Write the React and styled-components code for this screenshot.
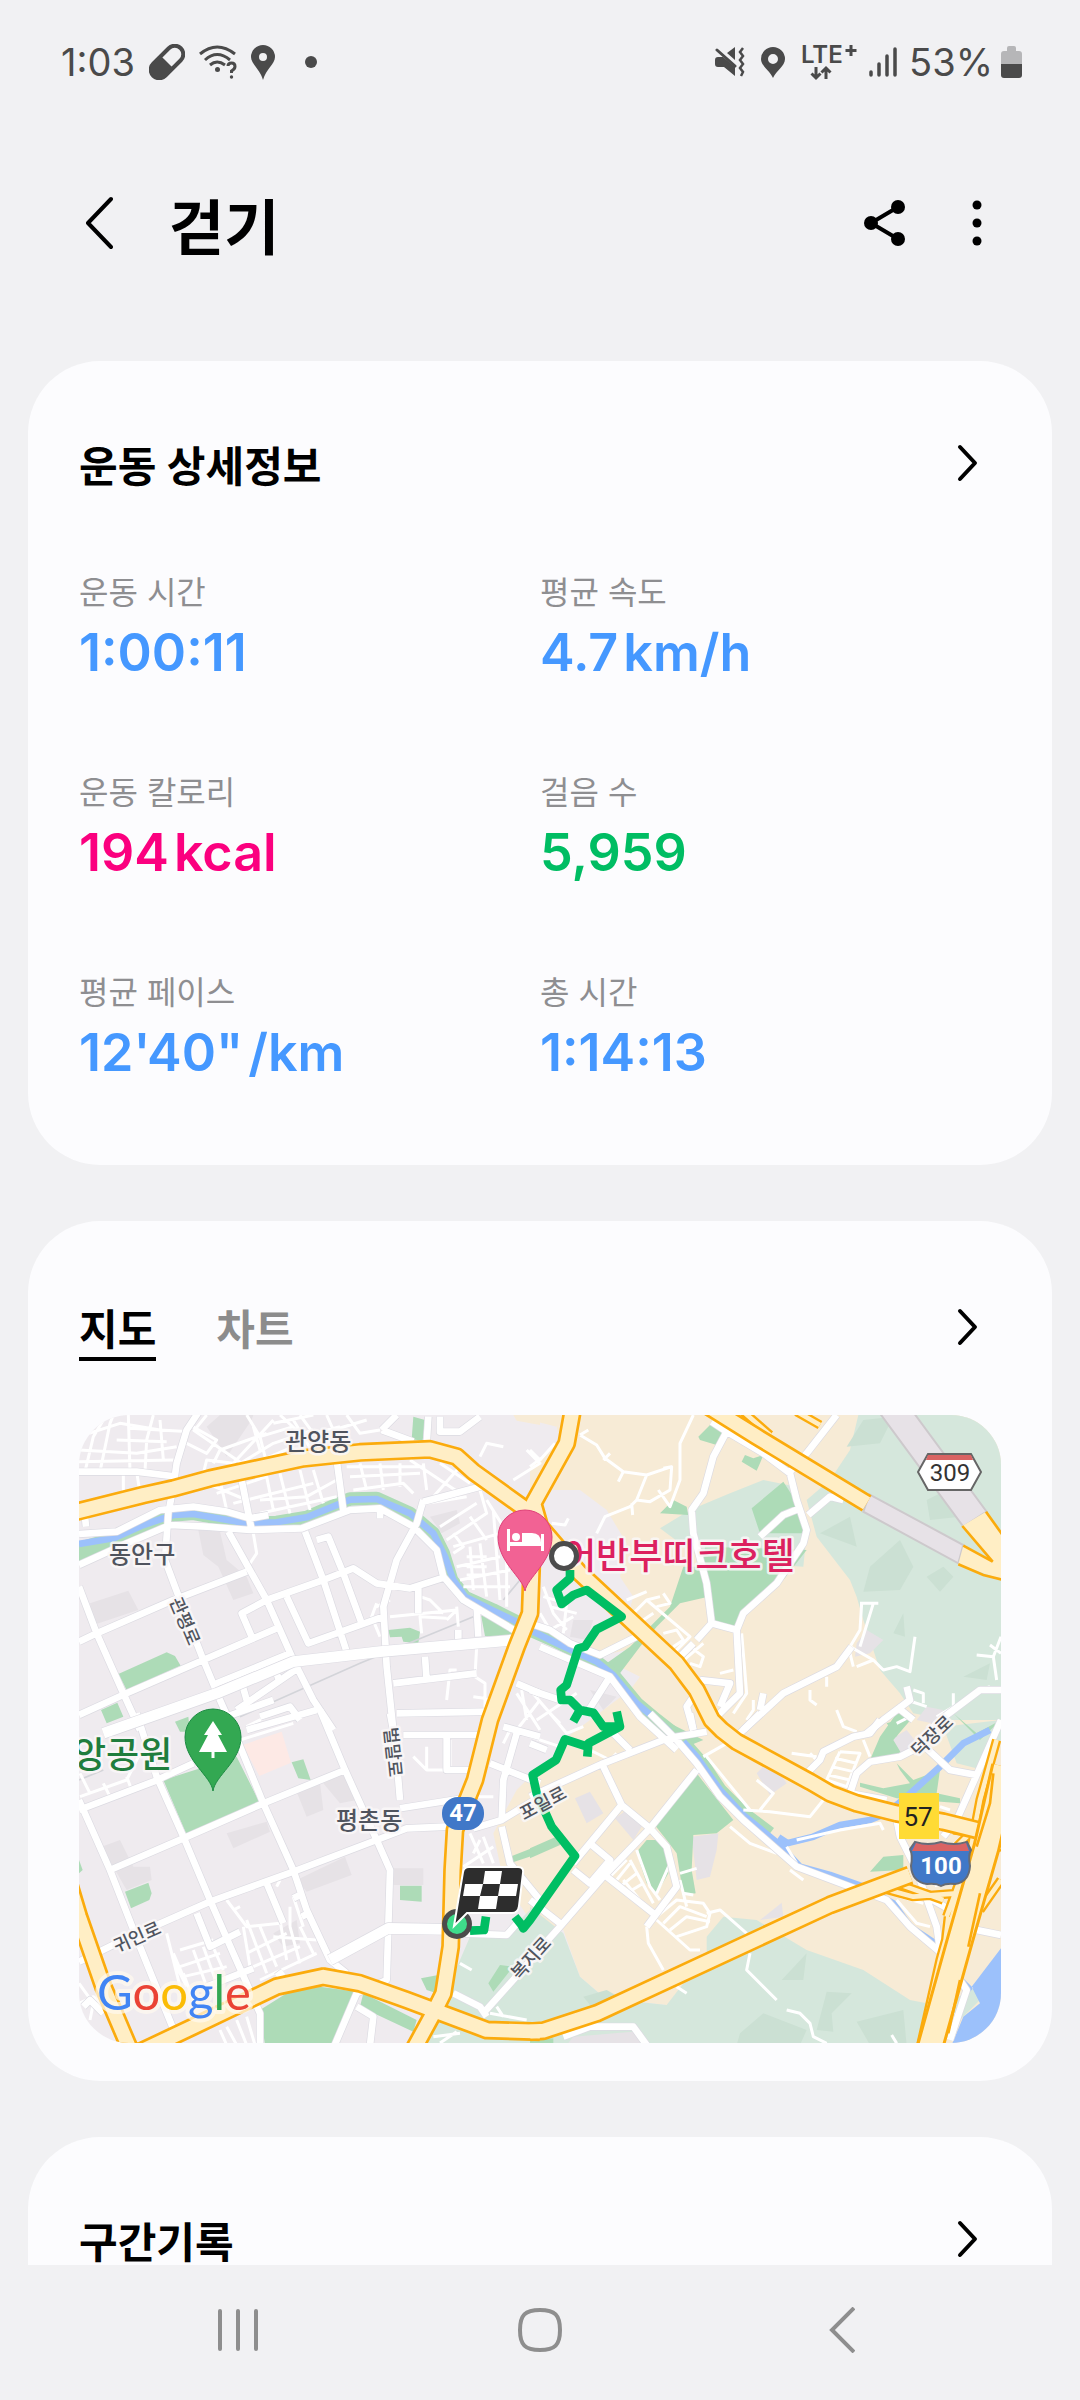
import React, { useState } from "react";
import styled, { createGlobalStyle } from "styled-components";

const GlobalStyle = createGlobalStyle`
  * {
    box-sizing: border-box;
  }

  body {
    margin: 0;
    background: #f1f1f3;
    color: #000;
    font-family: Inter, "Noto Sans CJK KR", sans-serif;
  }

  button {
    border: none;
    padding: 0;
    background: none;
    color: inherit;
    font: inherit;
    cursor: pointer;
  }

  svg {
    display: block;
    flex: none;
  }
`;

const Screen = styled.div`
  height: 100vh;
  display: flex;
  flex-direction: column;
`;

const StatusBar = styled.div`
  flex: none;
  height: 124px;
  padding: 0 58px 0 61px;
  display: flex;
  align-items: center;
  justify-content: space-between;
  color: #4a4a4a;
  font-size: 38px;
  font-weight: 400;
`;

const StatusGroup = styled.div`
  display: flex;
  align-items: center;
  gap: ${(props) => props.$gap}px;
`;

const Header = styled.header`
  flex: none;
  height: 198px;
  margin-bottom: 39px;
  padding: 0 76px 0 72px;
  display: flex;
  align-items: center;
`;

const IconButton = styled.button`
  width: 54px;
  height: 60px;
  display: flex;
  align-items: center;
  justify-content: center;
`;

const PageTitle = styled.h1`
  margin: 0 auto 0 43px;
  padding-top: 10px;
  font-size: 60px;
  line-height: 72px;
  font-weight: 700;
`;

const HeaderActions = styled.div`
  display: flex;
  gap: 38px;
`;

const Content = styled.main`
  flex: 1;
  min-height: 0;
  overflow: hidden;
  padding: 0 28px;
  display: flex;
  flex-direction: column;
  gap: 56px;
`;

const Card = styled.section`
  flex: none;
  min-height: 240px;
  padding: 72px 51px 38px;
  border-radius: 72px;
  background: #fcfcfe;
`;

const CardHead = styled.div`
  padding-right: 7px;
  display: flex;
  align-items: center;
  justify-content: space-between;
`;

const CardTitle = styled.h2`
  margin: 0;
  padding-top: 8px;
  font-size: 42px;
  line-height: 52px;
  font-weight: 600;
`;

const Stats = styled.dl`
  margin: 80px 0 44px;
  display: grid;
  grid-template-columns: 1fr 1fr;
  row-gap: 90px;
`;

const StatLabel = styled.dt`
  font-size: 32px;
  line-height: 40px;
  color: #8e8e91;
`;

const StatValue = styled.dd`
  margin: 10px 0 0;
  font-size: 52px;
  line-height: 60px;
  font-weight: 600;
  color: ${(props) => props.$color};
`;

const Unit = styled.span`
  margin-left: 5px;
`;

const Tabs = styled.div`
  display: flex;
  gap: 60px;
`;

const Tab = styled.button`
  height: 68px;
  padding-top: 10px;
  font-size: 42px;
  line-height: 54px;
  font-weight: 600;
  color: ${(props) => (props.$active ? "#000" : "#8c8c8c")};
  border-bottom: 4px solid ${(props) => (props.$active ? "#000" : "transparent")};
`;

const MapFrame = styled.div`
  margin-top: 54px;
  border-radius: 50px;
  overflow: hidden;

  svg {
    width: 100%;
    height: auto;
  }
`;

const NavBar = styled.nav`
  flex: none;
  height: 135px;
  padding: 0 87px 6px;
  display: grid;
  grid-template-columns: repeat(3, 1fr);
  align-items: center;
  justify-items: center;
`;

const stats = [
  { label: "운동 시간", value: "1:00:11", color: "#4598ff" },
  { label: "평균 속도", value: "4.7", unit: "km/h", color: "#4598ff" },
  { label: "운동 칼로리", value: "194", unit: "kcal", color: "#fb007f" },
  { label: "걸음 수", value: "5,959", color: "#00bd63" },
  { label: "평균 페이스", value: "12'40\"", unit: "/km", color: "#4598ff" },
  { label: "총 시간", value: "1:14:13", color: "#4598ff" },
];

// The map is stored as four tiles, each with its own origin.
const tiles = { nw: [0, 0], ne: [1410, 0], sw: [0, 960], se: [1410, 960] };

const land = {
  cream: {
    nw: "M1360 45H1440V75L1370 62Z",
    ne: "M0 45H1413V1929H400L410 1815 225 1795 150 1730 100 1590 0 1560-80 1440-110 1300-40 1170 0 1130 60 1100 100 1020 180 960 300 870 330 830 270 800 330 740 200 770 130 750 200 690 290 660 310 590 270 530 290 430 230 330 150 270 60 270 0 300V200L90 120 80 80 0 60Z",
  },
  forest: {
    ne: "M985 45H1413V960H1250L1150 940 1110 880 1050 810 1000 660 980 590 960 540 860 410 830 300 900 240 960 150ZM390 385L480 330 600 280 700 240 800 260 830 400 820 500 520 480 450 430Z",
    sw: "M1200 720L1230 650 1340 655 1380 600 1440 540V969H1100L1130 880Z",
    se: "M530 650L580 590 680 600 830 690 1000 750 1140 840 1190 850 1160 975H0V560L100 640 150 770 225 835 410 855 530 700ZM1250 850L1340 800 1350 840 1290 900ZM1240 20L1413 0V60L1360 150 1280 130Z",
  },
  forestDark: {
    ne: "M1190 300L1270 260 1340 290 1290 350 1200 360ZM1020 500L1110 420 1150 500 1110 570 1000 575ZM1190 530L1240 500 1270 530 1230 575ZM1090 700L1120 640 1125 710ZM1300 830L1380 790 1370 840ZM870 400L960 350 980 440ZM1000 60L1090 50 1050 130 950 140Z",
    se: "M755 780L830 700 820 780ZM890 815L965 820 905 880 910 935 860 930ZM980 905L1120 870 1130 975 1020 975ZM630 940L700 880 830 930 810 975 620 975ZM160 830L230 810 300 850 200 880Z",
  },
  district: {
    nw: "M440 80L480 45H580L575 60 500 170ZM90 610L205 572 235 630 100 675ZM415 390L480 395 500 480 560 530 580 580 520 600 475 500 430 465ZM1110 350L1190 330 1200 370 1145 400Z",
    ne: "M180 870L260 890 220 930ZM130 660H190L170 720 120 710ZM455 520L520 500 525 560 470 570ZM980 730L1010 690 1060 720 1020 760 975 770ZM1160 960L1190 920 1240 930 1230 975Z",
    sw: "M710 480L855 410 875 465 740 515ZM500 340L620 305 630 335 520 385ZM710 215L780 190 790 270 740 290ZM790 190L850 160 890 240 840 250ZM125 380L180 360 220 440H270L275 480 200 510ZM1000 445H1090V495H1000ZM640 640L710 600 720 670 670 680Z",
    se: "M485 350L565 340 560 390 540 470 500 480ZM135 235L180 215 220 280 170 310ZM255 295L290 270 335 320 310 360ZM680 160L720 120 770 190 720 225ZM1080 60L1130 30 1170 80 1100 110ZM130 950L310 935 360 975H110ZM690 600L755 548 760 590Z",
  },
  clinic: { sw: "M548 75L665 35 693 128 598 168Z" },
  park: {
    nw: "M1060 50L1095 60 1088 122 1055 118ZM985 690L1050 683 1080 695 1075 730 1030 725 1025 710 990 712ZM1263 645L1370 695 1330 712 1275 708ZM175 822L320 757 345 768 362 797 200 870ZM123 930L172 908 190 950 140 970ZM345 965L385 950 390 995H360ZM57 425L330 345 320 380 57 485Z",
    ne: "M505 110L540 75 580 95 560 135 510 120ZM635 185L645 165 670 175 700 165 690 190 680 212ZM665 325L760 245 815 330 830 400 690 400ZM525 440L830 450 760 540 640 640 610 680 550 670 535 590 450 610 380 680 330 740 270 820 230 790 300 740 420 620 460 500 520 500ZM390 340L430 300 470 320 475 345ZM1070 970L1120 955 1100 1010ZM1270 940L1340 1000 1413 960 1350 1020Z",
    sw: "M310 180L530 110 600 250 380 345ZM695 127L730 118 752 180 715 175ZM195 515L265 488 275 520 268 540 213 565ZM1020 497H1085V545L1020 540ZM600 870L680 820 780 800 890 815 860 890 820 975H615ZM910 820L1070 900 1060 935 900 860ZM1083 775L1135 765 1130 820 1100 810ZM1285 790L1320 735 1360 740 1300 815ZM57 420L68 450 57 460ZM1350 410L1440 375V400L1350 430Z",
    se: "M370 310L500 160 610 300 560 340 490 345 485 450 497 520 460 525 440 400 410 360ZM325 390L350 360H380L410 390 415 460 380 522 350 490 330 430ZM0 385L90 345V375L0 415ZM1100 130L1150 180 1230 150 1220 220 1290 235V250L1100 235 990 200V188L1060 205 1140 190 1110 150ZM1020 120L1050 50 1100-20 1150-10 1090 60 1120 110 1050 120ZM1020 455L1060 410 1120 405V450ZM300 -30L360 -20 520 60 470 80ZM0 960L70 955V975H0Z",
  },
  lake: { se: "M1413 685L1325 800 1350 850 1300 890 1265 975H1413ZM1290 765L1330 805 1320 815Z" },
};

const landColors = {
  cream: "#f7ebd6",
  forest: "#d5e7dc",
  forestDark: "#cbe0d3",
  district: "#e6e2e6",
  clinic: "#fde9e5",
  park: "#addbb7",
  lake: "#9cc1fb",
};

const riverBank = {
  nw: "M57 445L160 425 250 380 340 345 400 340 560 370 650 367 740 352 870 297 950 295 1050 340 1120 400 1150 460 1175 540 1215 592 1300 630 1390 675",
  ne: "M0 690L80 725 200 785 250 825 320 910 380 960 450 1015 520 1095 570 1170 640 1240 720 1300",
};

const river = {
  nw: "M57 432L160 415 250 375 340 345 400 342 560 370 650 367 740 352 870 299 950 297 1050 340 1120 400 1155 470 1180 540 1215 590 1300 632 1390 675",
  ne: "M0 690L80 730 200 785 250 825 320 910 380 960 420 995",
  se: "M460 65L500 110 570 210 640 285 750 375 810 440 900 465 1000 500 1090 550 1140 620 1215 670M750 375L850 350 930 315 1020 300 1070 280 1130 230 1230 140 1300 70 1380 30",
};

const lanes = {
  nw: "M57 110L180 70 300 90M57 150L230 160 350 140M57 185L340 180M75 215L100 110 130 60M120 215L150 70 160 45M205 45L210 215M280 45L260 120 255 215M300 60L310 180M170 120L320 125M210 85L390 95M230 215L240 280M190 215V290M380 70L470 120 440 160 380 130M400 90L560 200M460 190L480 150 620 100M430 220L440 180 520 190 640 60M500 215L640 130 760 90M560 45L600 110 700 80M600 150L580 80M620 190L600 110M660 45L720 100M700 60L760 160M640 70L760 45M720 45L760 100 840 80M800 45L820 90 920 60M860 45L900 100 960 90M560 200L700 140M440 250L560 300M480 240L500 330M470 280L620 230 640 330M520 310L760 250M600 300L740 290 830 240M660 220L690 340M720 210L750 330M600 340L830 290M760 210L790 310M870 230L1080 220M860 200L1090 200M880 270L1030 250 1060 280M900 190L920 270M960 190L970 270M1020 190V260M1090 190L1100 270M1050 180L1200 280M1140 190L1230 250M1200 200L1120 290M1100 310L1220 290M1140 380L1250 310M1160 420L1280 340 1260 270M1180 440L1320 400M1190 500L1320 470M1200 540L1350 510M1210 560L1350 560M1230 440L1240 570M1260 430L1280 590M1300 330L1320 600M1340 400V620M1180 400L1210 440 1180 460M1230 350L1280 420M1280 300L1330 380M1220 470H1280M1220 500H1280M1220 525H1280M1260 170L1280 130 1330 140M1400 150L1440 190 1360 240M440 45L400 95M580 400L590 460 570 490M950 610L935 650 960 710M990 650L1190 630 1160 660M1080 590L1110 600 1150 640M1085 700L1080 650 1160 655M1190 620L1195 680M990 600L950 620M1250 740L1245 830 1275 850V930M1160 900L1170 810 1190 810M1240 890L1310 900M1370 880L1440 990M1440 900L1370 990M1385 870L1400 960",
  ne: "M490 45L450 130V240L420 320 385 270M150 105L200 135 225 175 280 215 350 225 425 200M280 215L265 245M350 225L320 300 360 305 420 270 425 200 400 205M175 90L150 105M240 160L220 180M320 300L300 320 225 350 200 400M305 310L308 345M65 370L105 375 115 355M0 150L30 180 75 130M290 600L350 575M310 640L350 600 480 710 430 760 330 660M340 660L370 640M350 600L390 590M400 580L420 610 380 620M400 700L440 690 460 720 430 740M450 770L480 740 520 770 510 800 480 790M520 730L450 790M570 820L610 810M635 700L650 880 610 940M840 870V900L860 915M890 830V860M990 740L1030 610V610M990 610H1045M995 610L990 690 960 740 1030 780 1060 810 1100 800 1140 815 1155 710M980 800L1030 780M960 760L970 800M1130 900L1190 920M1150 870L1180 880V910M1270 880V920L1220 950M1380 860L1350 870M1340 765L1390 770 1413 710M1390 770L1400 840M1380 735L1413 760M650 960L670 930V900M40 560L70 640 110 690M60 620L140 640M40 590L110 610 100 700M30 640L60 690 130 650M0 870L60 940 90 970M20 960L140 880M0 200L40 170",
  sw: "M60 230L200 180 240 100M90 220L60 160M200 170L215 210M130 190L150 230M540 60L700 10M560 20L640 -20M360 690L460 660M360 740L480 700M370 760L400 840M340 720L380 800M400 690L440 800M430 680L470 790M450 660L490 750M340 700L370 770 500 740M500 540L560 620 660 610M520 570L540 560M550 620L570 740M560 600L620 760M600 620L650 740M560 700L680 640M580 740L720 680M600 780L770 700M660 600L680 720M690 620L720 730M720 620L760 700M640 650L770 660M690 560L690 620M700 530L730 620M650 500L660 480M320 640L360 800M480 930L500 975M500 920L530 975M530 900L560 975M560 890L585 975M1100 80V150M1060 110L1100 150H1160M1250 230H1300M1230 340L1270 430M1270 350L1300 430M1210 440L1300 380M1240 400L1260 360M1200 730L1235 750M1170 60V150M57 790L100 850 90 900M57 850L100 830 160 880M1290 880L1400 900M1310 860L1330 890M1120 950L1200 940M1140 969L1190 935M1330 70L1350 30",
  se: "M0 50L90 80M60 -20L110 40 160 20M180 90L240 120 260 100M600 320L660 370 740 400M640 270L720 275 840 290 880 240M520 110L590 70M530 110L660 270M690 270L730 220 680 180M785 100L860 110M840 100L870 130M930 95L890 180 950 200 990 100 930 95M915 115L980 130M905 140L970 155M895 165L960 180M770 380L800 430M800 360L930 330 1050 310 1060 330M780 450L820 480M320 390L360 500 390 540M300 430L260 480M300 420L370 550M280 480L330 540M240 470L290 420M270 500L320 460M290 520L340 490M420 430L380 520M450 460L500 445M450 480L470 560M380 590L440 540 520 550 540 580 530 620 440 650M400 610L450 560 530 590M420 630L470 590 540 605M380 600L480 690 510 690M460 520L490 525M350 620L355 670 400 750M530 580L570 570 650 640M660 700L650 750 740 840M770 870L810 880 840 910 850 950 890 970M1085 945L1100 970M440 800L470 820M1000 60L1020 110M1100 540L1160 610 1200 620M1110 530L1180 550M1200 440L1220 500M1230 260L1260 270M1250 850H1280M1240 900H1270M920 -30L940 20 980 35M1270 900L1250 920M1100 10L1140 -10",
};

const streets = {
  nw: "M420 30L380 90 350 190 340 260 325 340 315 480 360 600 430 780 480 900 520 990M57 215L230 215 335 228M57 402L170 395 300 330 400 320 500 335 570 355 625 345M57 495L200 430 330 375 440 380 570 390 725 385 870 330 960 325 1060 380 1130 450 1150 530 1210 600 1370 695M545 240L575 390M830 180L850 330M505 395L620 600 700 780 760 900 820 990M57 725L110 700 340 600 560 515M57 560L110 700 190 880 240 990M57 945L200 880 430 780 650 685M575 710L545 640 620 600 790 540 880 505 950 550 1050 565 1160 530M735 395L790 540 860 755M770 420L805 410 850 520 905 670M680 590L745 730 970 650M1090 300L1070 370 1010 480 970 620 980 800 1000 990M1090 305L1280 255M1075 565V640M1195 690V720M1095 770L1100 840M1000 850L1250 820M1010 940L1290 935M1370 850L1440 880M1250 620L1255 710M1100 130L1105 50M965 90L1010 45M965 90L1060 125M1140 50V95H1200L1260 50M960 325V355M75 350L78 380M470 850L690 760M530 930L720 800M540 830L560 900M640 790L660 850M600 950L690 920 720 960M560 990L770 930",
  ne: "M545 65L590 95 700 160 780 220 800 300 830 390 820 430 740 550 640 640 620 690 630 880 560 950M590 95L550 170 520 280 485 330 490 400 530 550 545 670 500 720M545 670L620 690M810 325L760 345 690 410M920 45L830 160 780 215M835 345L900 290 940 300M0 670L60 690 120 730 210 765 330 705M30 740L240 830 330 950 440 1050M240 830L170 940M0 870L90 900M490 890L470 920 490 990M510 840L600 850 570 920M640 990L760 880 920 800 965 740M700 880L690 930M1130 860L1140 900 1060 960 1010 1000M1100 920L1150 960M1413 870L1350 870 1230 960 1180 1010M440 780L490 730",
  sw: "M57 270L280 185 400 130M57 240L150 450 240 680 345 940M230 -20L290 170 370 350 450 540 520 700 600 880 600 975M520 30L610 250 700 450 740 570 810 720 860 760M780 -30L855 150 950 360 990 450 985 620 980 780 890 820 820 985M150 450L370 355 610 250 855 150M57 725L200 655 450 545 700 455 950 360 1040 325 1160 320M1020 265L1210 235M990 -20L1005 60 1020 240M1030 45H1270M1160 50V150H1240M1290 130L1440 190M1330 20L1440 50M1370 40L1330 180 1325 300 1240 325M1325 320L1350 430 1440 540M1325 300L1440 230M410 580L450 680 540 635M620 490L670 610M440 800L580 745M1180 820L1260 860 1280 890M1440 690L1270 880M890 860L940 890 930 975M70 860L90 840 130 880M500 -10L640 -60M1200 640L1340 645 1380 600M700 535L720 525M725 590L745 580M650 770L670 755",
  se: "M0 230L220 130 400 60 440 50 530 35M360 -20L440 60 500 130 570 230 640 300 800 440 960 500 1070 540 1140 620 1235 700M240 30L300 90M220 140L275 255 360 325 410 380 440 500 350 620M275 255L130 430M500 150L360 325 220 470 90 620 0 720M130 450L180 490 240 420 180 370M230 470L370 580M0 540L90 610M490 30L480-20M620 50L690-20M830 160L870 120 880 95 970 50 1020 40 1050 0M960 220L980 160 1020 125 1110 110 1190 70M960 220L1070 240M1190 85L1260 150 1340 165M1413 0L1340 165 1280 300 1240 350M1100 300L1110 350 1150 430M1170 480L1220 620 1230 690M1190 530L1270 575M1340 630L1413 645M1290 780L1310 810 1260 960M100 950L180 920 310 920 350 975M0 70L50 90",
};

const avenues = {
  nw: "M130 1000L470 880 700 785 960 755 1360 720",
  sw: "M810 720L985 625 1160 628",
};

const highways = {
  nw: "M30 340L250 285 340 265 450 235 730 175 900 157 1110 148 1190 170 1240 215 1400 330",
  ne: "M128 30L110 130 10 310 30 380 150 520 290 650 440 790 500 870 545 960 575 990 620 1025 840 1145 900 1180 980 1210 1100 1240 1240 1265 1340 1290M-10 320L5 500 0 640-40 740-120 960-165 1140-225 1290-232 1410-238 1640-260 1780-290 1840-350 1950M520 10L680 110 1010 310",
  sw: "M30 500L57 590 130 800 215 1000M220 1005L400 920 650 800 790 770 900 790 1040 840 1200 900 1280 930 1440 935",
  se: "M0 935L40 932 200 880 900 555 1140 465",
};

const ramps = {
  ne: "M640 35L720 105M800 35L870 75M1413 470L1340 370",
  se: "M1400 60L1350 240 1320 400 1230 720 1170 985M1255 590L1240 720 1180 985M1040 500L1150 530 1280 520M1100 490L1240 540M1413 380L1310 400M1413 480L1350 570M1270 330L1340 340 1413 300M1270 390L1330 330M1250 590L1290 480",
};

const expressways = {
  se: "M1425 140L1370 380 1290 660 1195 1000",
};

const route = {
  ne: "M120 510V535L80 570 95 612 130 585 170 570 275 650 200 688 165 740 145 745 110 855 92 870 95 900 120 900 150 930 130 965M150 930L190 938 220 980 270 980 260 935M270 980L175 1030 172 1070M172 1040L105 1018 78 1080 8 1125 20 1180 65 1280 135 1368 0 1560-20 1585-25 1575-45 1550",
  sw: "M1278 590L1272 630 1230 632",
};

const Layer = ({ paths, ...rest }) => (
  <g {...rest}>
    {Object.entries(paths).map(([tile, d]) => (
      <path key={tile} d={d} transform={`translate(${tiles[tile].join(" ")})`} />
    ))}
  </g>
);

const Road = ({ paths, width, edge, casing, fill }) => (
  <g fill="none" strokeLinejoin="round" strokeLinecap="butt">
    <Layer paths={paths} stroke={casing} strokeWidth={width} />
    <Layer paths={paths} stroke={fill} strokeWidth={width - edge} />
  </g>
);

const MapLabel = styled.text`
  font-family: Roboto, "Noto Sans CJK KR", sans-serif;
  font-size: ${(props) => props.$size || 24}px;
  font-weight: ${(props) => props.$weight || 500};
  fill: ${(props) => props.$color || "#50545e"};
  stroke: ${(props) => (props.$plain ? "none" : "rgba(250, 247, 248, 0.85)")};
  stroke-width: 5px;
  stroke-linejoin: round;
  paint-order: stroke;
`;

const StreetLabel = styled(MapLabel).attrs({ textAnchor: "middle", dominantBaseline: "central" })`
  font-size: 18px;
`;

const GoogleLabel = styled.text`
  font-family: Lato, sans-serif;
  font-size: 49px;
  stroke: rgba(255, 250, 240, 0.7);
  stroke-width: 8px;
  stroke-linejoin: round;
  paint-order: stroke;
`;

const streetLabels = [
  { name: "관평로", x: 106, y: 206, angle: 67 },
  { name: "벌말로", x: 314, y: 337, angle: 84 },
  { name: "귀인로", x: 58, y: 522, angle: -24 },
  { name: "포일로", x: 464, y: 388, angle: -28 },
  { name: "복지로", x: 452, y: 543, angle: -48 },
  { name: "덕장로", x: 853, y: 321, angle: -44 },
];

const RouteMap = () => (
  <svg viewBox="0 0 922 628" role="img" aria-label="운동 경로 지도">
    <rect width="922" height="628" fill="#efebef" />
    <g transform="translate(-19 -15) scale(0.33333)">
      {Object.keys(land).map((kind) => (
        <Layer key={kind} paths={land[kind]} fill={landColors[kind]} />
      ))}
      <g fill="none" strokeLinejoin="round">
        <Layer paths={riverBank} stroke="#addbb7" strokeWidth={40} />
        <Layer paths={river} stroke="#9cc1fb" strokeWidth={20} />
        <path d="M2180 1340L2150 1320" stroke="#9cc1fb" strokeWidth={40} />
        <path d="M540 950L900 790 1240 650M1330 600L1380 540M57 1140L130 1110" stroke="#d3d4d9" strokeWidth={5} />
      </g>
      <Layer paths={lanes} fill="none" stroke="#fff" strokeWidth={9} strokeLinejoin="round" />
      <Road paths={streets} width={24} edge={4} casing="#dcdbe2" fill="#fff" />
      <Road paths={avenues} width={36} edge={4} casing="#dcdbe2" fill="#fff" />
      <g fill="#e7e2e7" stroke="#cdc9cc" strokeWidth={6}>
        <path d="M2445 20L2555 30 2780 335 2710 380Z" />
        <path d="M2428 283L2710 435 2695 490 2410 335Z" />
      </g>
      <Road paths={ramps} width={28} edge={14} casing="#fbab0d" fill="#ffeec5" />
      <Road paths={highways} width={57} edge={16} casing="#fbab0d" fill="#ffeec5" />
      <Road paths={expressways} width={84} edge={18} casing="#fbab0d" fill="#ffeec5" />
      <path d="M2707 378L2778 335 2823 405V538L2695 493 2710 437 2800 487Z" fill="#ffeec5" />
      <g fill="none" stroke="#fbab0d" strokeWidth={8}>
        <path d="M2778 335L2830 408M2707 378L2798 485 2710 437M2695 493L2770 525 2830 540" />
        <path d="M2725 1640L2760 1480M2750 1340L2790 1210 2800 1120M2665 1900L2700 1740" />
      </g>
    </g>

    <MapLabel x="206" y="35">관양동</MapLabel>
    <MapLabel x="30" y="148">동안구</MapLabel>
    <MapLabel x="257" y="414">평촌동</MapLabel>
    <MapLabel x="-6" y="353" $size={36} $color="#1f7d3d">앙공원</MapLabel>
    <MapLabel x="484" y="154" $size={36} $color="#dc215f">어반부띠크호텔</MapLabel>

    <Layer
      paths={route}
      transform="translate(-19 -15) scale(0.33333)"
      fill="none"
      stroke="#00be63"
      strokeWidth={26}
      strokeLinejoin="round"
    />

    {streetLabels.map((label) => (
      <StreetLabel key={label.name} transform={`translate(${label.x} ${label.y}) rotate(${label.angle})`}>
        {label.name}
      </StreetLabel>
    ))}

    {/* hotel pin */}
    <g>
      <path d="M446 176C444 163 419 147 419 122A27 27 0 0 1 473 122C473 147 448 163 446 176Z" fill="#f26294" stroke="#df3f78" />
      <g fill="#fff">
        <path d="M428 114H431V127H462V119H465V136H462V131H431V136H428Z" />
        <circle cx="437" cy="122" r="4" />
        <path d="M443 118H453Q462 118 462 128H443Z" />
      </g>
    </g>

    {/* park pin */}
    <path d="M134 376C132 361 106 346 106 322A28 28 0 0 1 162 322C162 346 136 361 134 376Z" fill="#33a852" stroke="#1c8a42" />
    <path d="M134 306L143 320H139L148 337H135.500V343H132.500V337H120L129 320H125Z" fill="#fff" />

    {/* start point */}
    <circle cx="485" cy="141" r="12.500" fill="#fff" stroke="#4c4c4c" strokeWidth="5" />

    {/* finish flag */}
    <circle cx="378" cy="509" r="12.500" fill="#3fdc8b" stroke="#4c4c4c" strokeWidth="5" />
    <path
      d="M375 511L384 457Q385 452 390 452H439Q445 452 444 458L440 491Q439 498 433 498H388Z"
      fill="#2d2d2d"
      stroke="#fff"
      strokeWidth="2"
    />
    <path d="M406 456H423L421 469H439L437 481H419L417 494H399L401 481H384L386 469H404ZM404 469L401 481H419L421 469Z" fill="#fff" fillRule="evenodd" />

    {/* road shields */}
    <rect x="363" y="382" width="42" height="33" rx="16" fill="#4078c8" />
    <MapLabel x="384" y="406" textAnchor="middle" $size={24} $weight={700} $color="#fff" $plain>47</MapLabel>
    <path d="M849 39H892L902 57 892 75H849L839 57Z" fill="#fff" stroke="#666" strokeWidth="2" />
    <path d="M849 40H892L894 45H847Z" fill="#d96363" />
    <MapLabel x="871" y="66" textAnchor="middle" $size={24} $weight={400} $color="#333" $plain>309</MapLabel>
    <rect x="820" y="378" width="40" height="46" fill="#ffdb35" />
    <MapLabel x="839" y="411" textAnchor="middle" $size={26} $weight={400} $color="#222" $plain>57</MapLabel>
    <path d="M836 427Q849 431 862 427Q875 431 888 427L892 435Q889 440 891 451Q890 467 876 469Q867 468 862 471Q857 468 848 469Q833 467 832 451Q834 440 831 434Z" fill="#4078c8" stroke="#666b75" strokeWidth="2" />
    <path d="M837 428Q849 432 862 428Q875 432 887 428L890 436H833Z" fill="#d96363" />
    <MapLabel x="862" y="459" textAnchor="middle" $size={24} $weight={700} $color="#fff" $plain>100</MapLabel>

    <GoogleLabel x="18" y="595">
      <tspan fill="#4285f4">G</tspan>
      <tspan fill="#ea4335">o</tspan>
      <tspan fill="#fbbc05">o</tspan>
      <tspan fill="#4285f4">g</tspan>
      <tspan fill="#34a853">l</tspan>
      <tspan fill="#ea4335">e</tspan>
    </GoogleLabel>
  </svg>
);

const Pill = () => (
  <svg width="36" height="36" viewBox="0 0 36 36">
    <g transform="rotate(45 18 18)">
      <rect x="9.500" y="-1.500" width="17" height="39" rx="8.500" fill="none" stroke="currentColor" strokeWidth="4" />
      <path d="M8 18H28V28A10 10 0 0 1 8 28Z" fill="currentColor" />
    </g>
  </svg>
);

const WifiUnknown = () => (
  <svg width="38" height="34" viewBox="0 0 38 34" fill="none" stroke="currentColor" strokeWidth="3">
    <path d="M1 9Q18 -5 36 9M6 15Q18 4 31 15M11 20Q18 14 26 20" />
    <circle cx="18.500" cy="24.500" r="2.500" fill="currentColor" stroke="none" />
    <path d="M29 21Q29 18 32.500 18T36 21.500Q36 24 32.500 26V28" />
    <circle cx="32.500" cy="32" r="1.700" fill="currentColor" stroke="none" />
  </svg>
);

const Pin = ({ height, hole }) => (
  <svg width="24" height={height} viewBox={`0 0 24 ${height}`}>
    <path
      d={`M12 0A12 12 0 0 1 24 12C24 19 15 24 12 ${height}C9 24 0 19 0 12A12 12 0 0 1 12 0ZM12 ${12 - hole}A${hole} ${hole} 0 0 0 12 ${12 + hole}A${hole} ${hole} 0 0 0 12 ${12 - hole}Z`}
      fill="currentColor"
    />
  </svg>
);

const MuteVibrate = () => (
  <svg width="30" height="30" viewBox="0 0 30 30">
    <path d="M0 13Q0 10 3 10H8L20 20V29L9 20H3Q0 20 0 17ZM12 6L20 0V13Z" fill="currentColor" />
    <path d="M2 3L20 19" stroke="currentColor" strokeWidth="3" strokeLinecap="round" />
    <path d="M28 1L25 5 28 9 25 13 28 17 25 21 28 25 26 29" fill="none" stroke="currentColor" strokeWidth="2.500" />
  </svg>
);

const LteText = styled.text`
  font-family: Inter, sans-serif;
  font-size: 24px;
  font-weight: 600;
  fill: currentColor;
`;

const Lte = () => (
  <svg width="56" height="52" viewBox="0 -8 56 52">
    <LteText x="0" y="19">LTE</LteText>
    <path d="M50 1V12M44.500 6.500H55.500" stroke="currentColor" strokeWidth="3" />
    <path d="M15 23V34M10.500 29.500L15 34 19.500 29.500M25 35V24M20.500 28.500L25 24 29.500 28.500" fill="none" stroke="currentColor" strokeWidth="3" />
  </svg>
);

const Signal = () => (
  <svg width="28" height="30" viewBox="0 0 28 30" stroke="currentColor" strokeWidth="3.500" strokeLinecap="round">
    <path d="M2 25V28M10 17V28M18 9V28M26 2V28" />
  </svg>
);

const Battery = () => (
  <svg width="21" height="32" viewBox="0 0 21 32">
    <path d="M6 2Q6 0 8 0H13Q15 0 15 2V5H18Q21 5 21 8V19H0V8Q0 5 3 5H6Z" fill="#b6b6b8" />
    <path d="M0 18H21V29Q21 32 18 32H3Q0 32 0 29Z" fill="currentColor" />
  </svg>
);

const MoreButton = ({ label }) => (
  <IconButton aria-label={label}>
    <svg width="21" height="38" viewBox="0 0 21 38" fill="none" stroke="#000" strokeWidth="4" strokeLinecap="round" strokeLinejoin="round">
      <path d="M3 3L18 19L3 35" />
    </svg>
  </IconButton>
);

const App = () => {
  const [tab, setTab] = useState("지도");

  return (
    <Screen>
      <GlobalStyle />
      <StatusBar>
        <StatusGroup $gap={14}>
          <span>1:03</span>
          <Pill />
          <WifiUnknown />
          <Pin height={35} hole={4} />
          <svg width="44" height="12" viewBox="0 0 44 12">
            <circle cx="22" cy="6" r="6" fill="currentColor" />
          </svg>
        </StatusGroup>
        <StatusGroup $gap={16}>
          <MuteVibrate />
          <Pin height={31} hole={5} />
          <StatusGroup $gap={12}>
            <Lte />
            <Signal />
            <StatusGroup $gap={8}>
              <span>53%</span>
              <Battery />
            </StatusGroup>
          </StatusGroup>
        </StatusGroup>
      </StatusBar>

      <Header>
        <IconButton aria-label="뒤로">
          <svg width="28" height="54" viewBox="0 0 28 54" fill="none" stroke="#000" strokeWidth="4" strokeLinecap="round" strokeLinejoin="round">
            <path d="M26 3L3 27L26 51" />
          </svg>
        </IconButton>
        <PageTitle>걷기</PageTitle>
        <HeaderActions>
          <IconButton aria-label="공유">
            <svg width="42" height="48" viewBox="0 0 42 48">
              <path d="M34 8L7 24L34 40" fill="none" stroke="#000" strokeWidth="4" />
              <circle cx="34" cy="8" r="7" />
              <circle cx="7" cy="24" r="7" />
              <circle cx="34" cy="40" r="7" />
            </svg>
          </IconButton>
          <IconButton aria-label="더보기">
            <svg width="10" height="46" viewBox="0 0 10 46">
              <circle cx="5" cy="5" r="4.500" />
              <circle cx="5" cy="23" r="4.500" />
              <circle cx="5" cy="41" r="4.500" />
            </svg>
          </IconButton>
        </HeaderActions>
      </Header>

      <Content>
        <Card>
          <CardHead>
            <CardTitle>운동 상세정보</CardTitle>
            <MoreButton label="운동 상세정보 보기" />
          </CardHead>
          <Stats>
            {stats.map((stat) => (
              <div key={stat.label}>
                <StatLabel>{stat.label}</StatLabel>
                <StatValue $color={stat.color}>
                  {stat.value}
                  {stat.unit && <Unit>{stat.unit}</Unit>}
                </StatValue>
              </div>
            ))}
          </Stats>
        </Card>

        <Card>
          <CardHead>
            <Tabs role="tablist">
              {["지도", "차트"].map((name) => (
                <Tab key={name} role="tab" aria-selected={tab === name} $active={tab === name} onClick={() => setTab(name)}>
                  {name}
                </Tab>
              ))}
            </Tabs>
            <MoreButton label="지도 보기" />
          </CardHead>
          <MapFrame>
            <RouteMap />
          </MapFrame>
        </Card>

        <Card>
          <CardHead>
            <CardTitle>구간기록</CardTitle>
            <MoreButton label="구간기록 보기" />
          </CardHead>
        </Card>
      </Content>

      <NavBar>
        <IconButton aria-label="최근 앱">
          <svg width="40" height="44" viewBox="0 0 40 44" stroke="#8e8e8e" strokeWidth="4" strokeLinecap="round">
            <path d="M2 3V41M20 3V41M38 3V41" />
          </svg>
        </IconButton>
        <IconButton aria-label="홈">
          <svg width="46" height="46" viewBox="0 0 46 46" fill="none" stroke="#8e8e8e" strokeWidth="4">
            <path d="M23 3C38 3 43 8 43 23S38 43 23 43S3 38 3 23S8 3 23 3Z" />
          </svg>
        </IconButton>
        <IconButton aria-label="이전">
          <svg width="26" height="46" viewBox="0 0 26 46" fill="none" stroke="#8e8e8e" strokeWidth="4">
            <path d="M25 1L3 23L25 45" />
          </svg>
        </IconButton>
      </NavBar>
    </Screen>
  );
};

export default App;
